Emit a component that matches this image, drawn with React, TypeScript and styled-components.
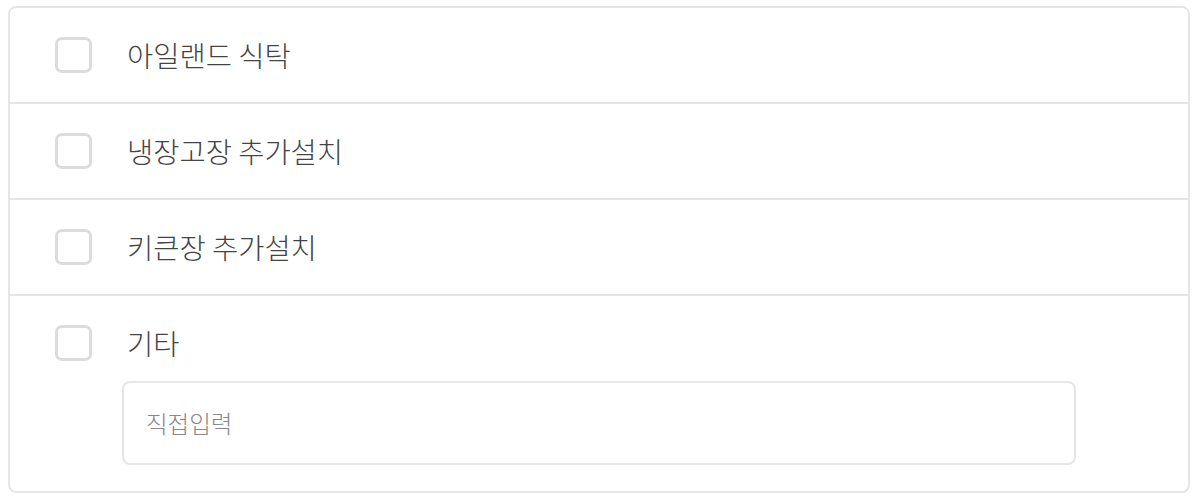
import React, { useState } from "react";
import styled, { createGlobalStyle } from "styled-components";

const GlobalStyle = createGlobalStyle`
  body {
    margin: 6px 10px 8px 8px;
    background: #fff;
    font-family: "Noto Sans CJK KR", "Noto Sans", sans-serif;
  }
`;

const Panel = styled.div`
  border: 2px solid #e6e6e6;
  border-radius: 8px;
  background: #fff;
`;

const Row = styled.div<{ $last?: boolean }>`
  display: flex;
  flex-direction: column;
  justify-content: center;
  min-height: 96px;
  padding: ${({ $last }) => ($last ? "29px 0 26px" : "0")};
  box-sizing: border-box;
  border-bottom: ${({ $last }) => ($last ? "none" : "2px solid #e6e6e6")};
`;

const Label = styled.label`
  display: flex;
  align-items: center;
  gap: 35px;
  padding-left: 45px;
  cursor: pointer;
`;

const Box = styled.span<{ $checked: boolean }>`
  width: 37px;
  height: 36px;
  box-sizing: border-box;
  border: 3px solid #dcdcdc;
  border-radius: 7px;
  background: ${({ $checked }) => ($checked ? "#dcdcdc" : "#fff")};
  flex-shrink: 0;
`;

const Text = styled.span`
  font-size: 28.5px;
  font-weight: 300;
  color: #444;
  line-height: 36px;
`;

const Input = styled.input`
  margin: 20px 0 0 112px;
  width: 954px;
  height: 84px;
  box-sizing: border-box;
  border: 2px solid #e6e6e6;
  border-radius: 8px;
  padding: 0 22px;
  font-family: "Noto Sans CJK KR", "Noto Sans", sans-serif;
  font-size: 23.5px;
  font-weight: 300;
  color: #333;
  outline: none;
  &::placeholder {
    color: #888;
  }
`;

const options = ["아일랜드 식탁", "냉장고장 추가설치", "키큰장 추가설치", "기타"];

export default function App() {
  const [checked, setChecked] = useState<Record<string, boolean>>({});
  const toggle = (k: string) => setChecked((c) => ({ ...c, [k]: !c[k] }));

  return (
    <>
      <GlobalStyle />
      <Panel>
        {options.map((opt, i) => {
          const last = i === options.length - 1;
          return (
            <Row key={opt} $last={last}>
              <Label onClick={() => toggle(opt)}>
                <Box $checked={!!checked[opt]} />
                <Text>{opt}</Text>
              </Label>
              {last && <Input placeholder="직접입력" />}
            </Row>
          );
        })}
      </Panel>
    </>
  );
}
